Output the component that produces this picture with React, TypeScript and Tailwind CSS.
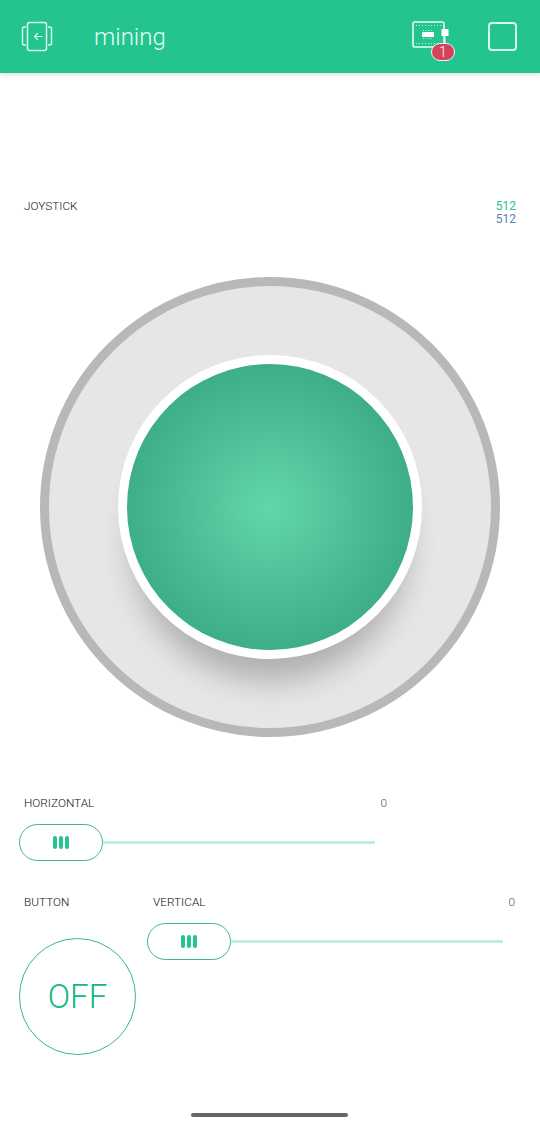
const labelFont = "font-['Roboto',sans-serif] font-light text-[11.8px] leading-[13px] text-[#111]";
const valueFont = "font-['Roboto',sans-serif] font-normal text-[12px] leading-[13px]";

function SliderThumb() {
  return (
    <div className="flex h-[37px] w-[84px] shrink-0 items-center justify-center gap-[2px] rounded-full border border-[#3fb391] bg-white">
      <span className="h-[13px] w-[4px] rounded-[2px] bg-[#23c48e]" />
      <span className="h-[13px] w-[4px] rounded-[2px] bg-[#23c48e]" />
      <span className="h-[13px] w-[4px] rounded-[2px] bg-[#23c48e]" />
    </div>
  );
}

function Slider({ label, value, inset = "pl-[5px]" }: { label: string; value: string; inset?: string }) {
  return (
    <div className="flex flex-col">
      <div className={`-mr-[12px] flex justify-between ${inset} ${labelFont}`}>
        <span>{label}</span>
        <span className="text-[#555]">{value}</span>
      </div>
      <div className="mt-[14px] flex items-center">
        <SliderThumb />
        <div className="h-[3px] flex-1 bg-[#bdf0df]" />
      </div>
    </div>
  );
}

function BackIcon() {
  return (
    <svg width="32" height="32" viewBox="0 0 32 32" fill="none" stroke="#d8f8ec" strokeWidth="1.5" strokeLinecap="round" strokeLinejoin="round">
      <rect x="6.5" y="1.5" width="19" height="28" rx="2" />
      <path d="M4.5 6H3a1.5 1.5 0 0 0-1.5 1.5v15A1.5 1.5 0 0 0 3 24h1.5" />
      <path d="M27.5 6H29a1.5 1.5 0 0 1 1.5 1.5v15A1.5 1.5 0 0 1 29 24h-1.5" />
      <path d="M21 15.5h-7M16.5 12.5l-3 3 3 3" strokeWidth="1.2" />
    </svg>
  );
}

function DeviceIcon() {
  return (
    <div className="relative h-[40px] w-[44px]">
      <svg width="38" height="28" viewBox="0 0 38 28" fill="none" className="absolute left-[-1px] top-[-1px]">
        <rect x="1" y="2" width="31" height="25" rx="1.5" stroke="#e6fbf3" strokeWidth="1.6" />
        <path d="M4 5.5h25M4 23.5h25" stroke="#bff3e0" strokeWidth="1.2" strokeDasharray="1 2" />
        <rect x="10" y="12" width="12" height="5" fill="#fff" />
        <path d="M11 18.5h10M11 10.5h10" stroke="#bff3e0" strokeWidth="1" strokeDasharray="1 1.5" />
        <rect x="29.5" y="9" width="7" height="7" fill="#fff" />
        <path d="M33 16v12" stroke="#fff" strokeWidth="1" />
      </svg>
      <div className="absolute left-[18px] top-[22px] flex h-[18px] w-[24px] items-center justify-center rounded-full border border-[#e6fbf3] bg-[#d3435c] font-['Roboto',sans-serif] text-[14px] font-light leading-none text-white">
        1
      </div>
    </div>
  );
}

export default function App() {
  return (
    <div className="flex h-[1130px] w-[540px] flex-col overflow-hidden bg-white">
      <header className="flex h-[73px] shrink-0 items-center bg-[#23c48e] pl-[21px] pr-[23px] shadow-[0_1px_6px_rgba(0,0,0,0.18)]">
        <BackIcon />
        <h1 className="ml-[41px] flex-1 font-['Roboto',sans-serif] text-[24px] font-light leading-none text-[#e6fcf4]">
          mining
        </h1>
        <div className="mr-[31px] mt-[9px]">
          <DeviceIcon />
        </div>
        <div className="h-[29px] w-[29px] rounded-[4px] border-2 border-[#d8f8ec]" />
      </header>

      <main className="flex flex-1 flex-col px-[19px] pt-[127px]">
        <div className={`flex justify-between pl-[5px] pr-[5px] ${labelFont}`}>
          <span>JOYSTICK</span>
          <div className={`flex flex-col items-end ${valueFont}`}>
            <span className="text-[#23c48e]">512</span>
            <span className="text-[#5f7cb8]">512</span>
          </div>
        </div>

        <div className="mt-[51px] flex justify-center">
          <div className="flex h-[460px] w-[460px] items-center justify-center rounded-full border-[9px] border-[#b8b8b8] bg-[#e6e6e6]">
            <div className="flex h-[304px] w-[304px] items-center justify-center rounded-full bg-white shadow-[0_36px_30px_-14px_rgba(0,0,0,0.24)]">
              <div className="h-[286px] w-[286px] rounded-full bg-[radial-gradient(circle_closest-side,#62d6ab_0%,#3dae88_100%)]" />
            </div>
          </div>
        </div>

        <div className="mt-[60px] w-[356px]">
          <Slider label="HORIZONTAL" value="0" />
        </div>

        <div className="mt-[35px] flex gap-[11px]">
          <div className="flex w-[117px] shrink-0 flex-col">
            <span className={`pl-[5px] ${labelFont}`}>BUTTON</span>
            <div className="mt-[29px] flex h-[117px] w-[117px] items-center justify-center rounded-full border border-[#3fb391] font-['Roboto',sans-serif] text-[33px] font-light leading-none text-[#14b87f]">
              OFF
            </div>
          </div>
          <div className="flex-1 pr-[18px]">
            <Slider label="VERTICAL" value="0" inset="pl-[6px]" />
          </div>
        </div>
      </main>

      <div className="flex shrink-0 justify-center pb-[13px]">
        <div className="mr-[2px] h-[4px] w-[157px] rounded-full bg-[#666]" />
      </div>
    </div>
  );
}
